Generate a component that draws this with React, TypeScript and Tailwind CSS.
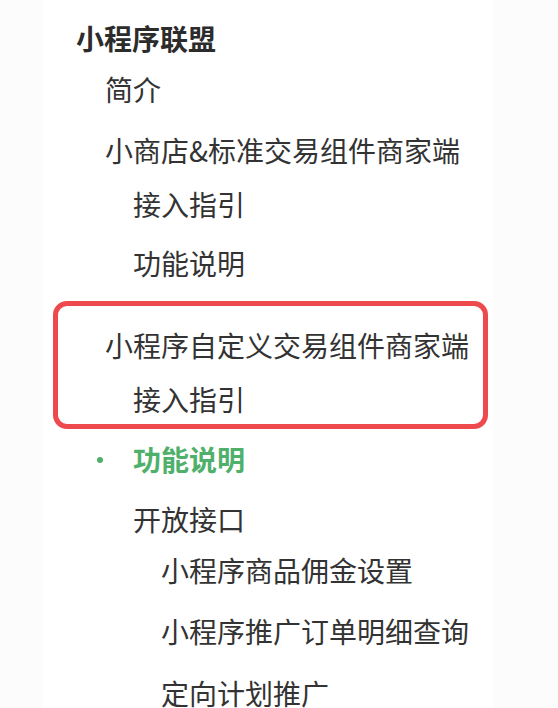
import React from "react";

type Item = {
  title: string;
  active?: boolean;
  mt: number;
  children?: Item[];
  boxed?: boolean;
};

const tree: Item[] = [
  { title: "简介", mt: 7 },
  {
    title: "小商店&标准交易组件商家端",
    mt: 17,
    children: [
      { title: "接入指引", mt: 10 },
      { title: "功能说明", mt: 15 },
    ],
  },
  {
    title: "小程序自定义交易组件商家端",
    mt: 38,
    boxed: true,
    children: [
      { title: "接入指引", mt: 10 },
      { title: "功能说明", mt: 16, active: true },
      {
        title: "开放接口",
        mt: 16,
        children: [
          { title: "小程序商品佣金设置", mt: 7 },
          { title: "小程序推广订单明细查询", mt: 17 },
          { title: "定向计划推广", mt: 18 },
        ],
      },
    ],
  },
];

function Node({ item }: { item: Item }) {
  return (
    <li className="relative" style={{ marginTop: item.mt }}>
      {item.boxed && (
        <div className="pointer-events-none absolute left-[-52px] top-[-22px] h-[128px] w-[435px] rounded-[14px] border-[5px] border-[#ee4a4e]" />
      )}
      <a
        className={`relative block h-11 leading-[44px] whitespace-nowrap ${
          item.active ? "font-semibold text-[#4fb06c]" : "text-[#333]"
        }`}
      >
        {item.active && (
          <span className="absolute left-[-36px] top-[20px] h-[6px] w-[6px] rounded-full bg-[#4fb06c]" />
        )}
        {item.title}
      </a>
      {item.children && (
        <ul className="pl-[28px]">
          {item.children.map((c, i) => (
            <Node key={i} item={c} />
          ))}
        </ul>
      )}
    </li>
  );
}

export default function App() {
  return (
    <div
      className="h-[708px] w-[558px] overflow-hidden bg-[#fcfcfc]"
      style={{ fontFamily: '"Noto Sans CJK SC", "Noto Sans", sans-serif' }}
    >
      <div className="ml-[42px] h-full w-[452px] bg-white pl-[34px] pt-[16px] text-[28px]">
        <p className="h-11 font-bold leading-[44px] text-[#2c2c2c]">小程序联盟</p>
        <ul className="pl-[29px]">
          {tree.map((it, i) => (
            <Node key={i} item={it} />
          ))}
        </ul>
      </div>
    </div>
  );
}
